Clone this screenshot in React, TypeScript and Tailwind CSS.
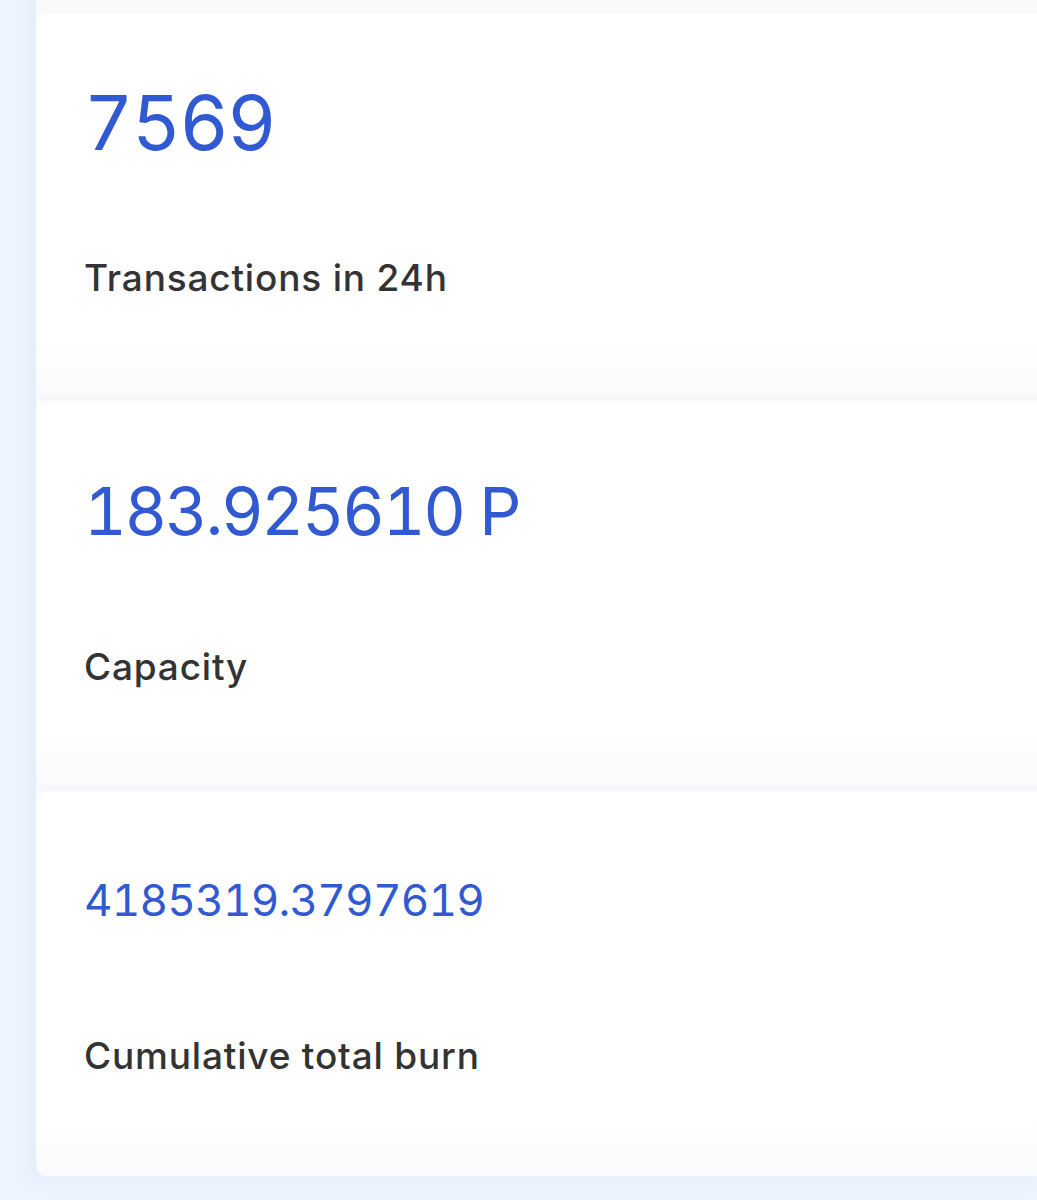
const stats = [
  { value: "7569", label: "Transactions in 24h", size: "text-[76px] tracking-[-0.02em]" },
  { value: "183.925610 P", label: "Capacity", size: "text-[66px] tracking-[-0.035em]" },
  { value: "4185319.3797619", label: "Cumulative total burn", size: "text-[44px] tracking-[-0.017em]" },
];

const StatCard = ({ value, label, size }: { value: string; label: string; size: string }) => {
  return (
    <div className="h-[384px] w-[1040px] rounded-l-[10px] bg-linear-to-b from-white from-85% to-[#f9fafc] pl-[48px] pt-[40px] shadow-[0_1px_0_rgba(235,240,248,0.9)]">
      <div className="h-[136px] flex items-center">
        <div className={`${size} leading-none text-[#3059d2] tabular-nums`}>{value}</div>
      </div>
      <div className="mt-[69px] text-[37px] leading-none font-medium text-[#333333] tracking-[0.022em]">{label}</div>
    </div>
  );
};

export default function App() {
  return (
    <div
      className="w-full min-h-[1200px] overflow-hidden bg-[#eef4fe]"
      style={{ fontFamily: "Inter, 'Noto Sans', sans-serif" }}
    >
      <div className="ml-[36px] flex flex-col gap-[5px] -mt-[100px] rounded-l-[10px] bg-[#f8fafc] shadow-[-6px_4px_18px_rgba(90,140,230,0.08)]">
        <div className="h-[109px] w-[1040px] rounded-l-[10px] bg-linear-to-b from-white from-70% to-[#f9fafc]" />
        {stats.map((s) => (
          <StatCard key={s.label} {...s} />
        ))}
      </div>
    </div>
  );
}
